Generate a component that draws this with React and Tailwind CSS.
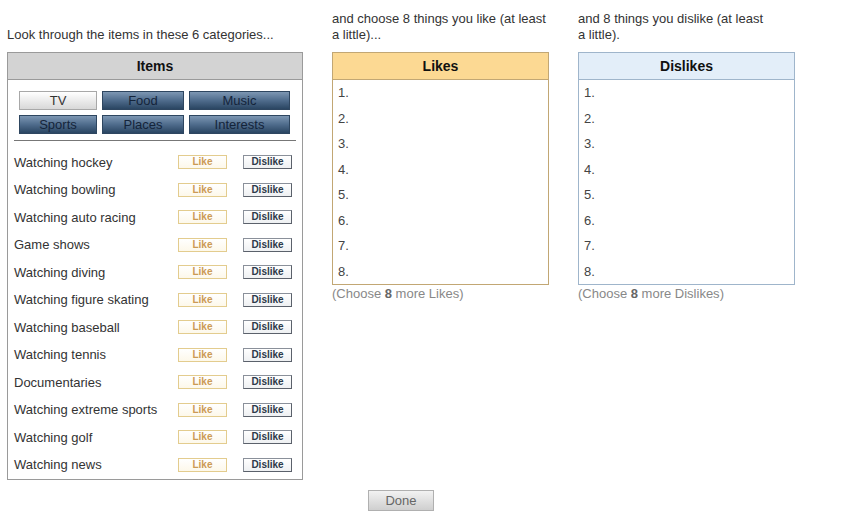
import React from "react";

const categories = [
  { name: "TV", width: "w-[78px]", active: true },
  { name: "Food", width: "w-[82px]" },
  { name: "Music", width: "w-[101px]" },
  { name: "Sports", width: "w-[78px]" },
  { name: "Places", width: "w-[82px]" },
  { name: "Interests", width: "w-[101px]" },
];

const items = [
  "Watching hockey",
  "Watching bowling",
  "Watching auto racing",
  "Game shows",
  "Watching diving",
  "Watching figure skating",
  "Watching baseball",
  "Watching tennis",
  "Documentaries",
  "Watching extreme sports",
  "Watching golf",
  "Watching news",
];

const slots = [1, 2, 3, 4, 5, 6, 7, 8];

function CategoryButton({ cat }) {
  if (cat.active) {
    return (
      <button
        className={`${cat.width} h-[19px] border border-[#a8a8a8] bg-gradient-to-b from-white to-[#d8d8d8] text-[13px] leading-none text-[#333]`}
      >
        {cat.name}
      </button>
    );
  }
  return (
    <button
      className={`${cat.width} h-[19px] border border-[#2e4660] bg-gradient-to-b from-[#7d97b3] via-[#4f6c8c] to-[#2a4562] text-[13px] leading-none text-[#14243a]`}
    >
      {cat.name}
    </button>
  );
}

function ListPanel({ title, headerClass, borderClass, label }) {
  return (
    <div className="flex flex-col w-[217px]">
      <div className={`border ${borderClass} bg-white`}>
        <div
          className={`h-[27px] flex items-center justify-center border-b ${borderClass} ${headerClass} text-[14px] font-bold text-[#111]`}
        >
          {title}
        </div>
        <div className="flex flex-col pl-[5px]">
          {slots.map((n) => (
            <div key={n} className="h-[25.5px] flex items-center text-[13px] text-[#444]">
              {n}.
            </div>
          ))}
        </div>
      </div>
      <div className="text-[13px] leading-[16px] text-[#888] mt-px">
        (Choose <span className="font-bold text-[#666]">8</span> more {label})
      </div>
    </div>
  );
}

export default function App() {
  return (
    <div className="bg-white w-[850px] h-[524px] pt-[11px] pl-[7px] font-['Liberation_Sans',Arial,sans-serif]">
      <div className="flex">
        {/* items column */}
        <div className="flex flex-col w-[296px]">
          <div className="h-[32px] mb-[9px] flex items-end text-[13px] leading-[16px] text-[#333]">
            Look through the items in these 6 categories...
          </div>
          <div className="border border-[#9a9a9a]">
            <div className="h-[27px] flex items-center justify-center bg-[#d3d3d3] border-b border-[#9a9a9a] text-[14px] font-bold text-[#111]">
              Items
            </div>
            <div className="px-[6px] pt-[11px]">
              <div className="grid grid-cols-[78px_82px_101px] gap-x-[5px] gap-y-[5px] pl-[5px]">
                {categories.map((c) => (
                  <CategoryButton key={c.name} cat={c} />
                ))}
              </div>
              <div className="mt-[6px] border-t border-[#777]" />
              <div className="flex flex-col pt-[7.5px]">
                {items.map((item) => (
                  <div key={item} className="h-[27.5px] flex items-center text-[13px] text-[#333]">
                    <span className="flex-1">{item}</span>
                    <button className="w-[49px] h-[14px] border border-[#e3cc8e] bg-gradient-to-b from-white to-[#fdf8ea] text-[10px] font-bold leading-none text-[#cc9a55]">
                      Like
                    </button>
                    <button className="ml-[16px] mr-[4px] w-[49px] h-[14px] border border-[#8a909a] border-b-[#5b616b] border-r-[#5b616b] bg-gradient-to-b from-white to-[#eef0f2] text-[10px] font-bold leading-none text-[#2d3a4a]">
                      Dislike
                    </button>
                  </div>
                ))}
              </div>
            </div>
          </div>
        </div>

        {/* likes column */}
        <div className="flex flex-col ml-[29px]">
          <div className="h-[32px] mb-[9px] w-[217px] flex items-end text-[13px] leading-[16px] text-[#333]">
            and choose 8 things you like (at least a little)...
          </div>
          <ListPanel
            title="Likes"
            headerClass="bg-[#fcd993]"
            borderClass="border-[#c2a774]"
            label="Likes"
          />
        </div>

        {/* dislikes column */}
        <div className="flex flex-col ml-[29px]">
          <div className="h-[32px] mb-[9px] w-[192px] flex items-end text-[13px] leading-[16px] text-[#333]">
            and 8 things you dislike (at least a little).
          </div>
          <ListPanel
            title="Dislikes"
            headerClass="bg-[#e3eef9]"
            borderClass="border-[#9fb5cb]"
            label="Dislikes"
          />
        </div>
      </div>

      <div className="w-[788px] flex justify-center mt-[10px]">
        <button className="w-[66px] h-[21px] border border-[#b0b0b0] bg-gradient-to-b from-[#f2f2f2] to-[#cfcfcf] text-[13px] leading-none text-[#666]">
          Done
        </button>
      </div>
    </div>
  );
}
